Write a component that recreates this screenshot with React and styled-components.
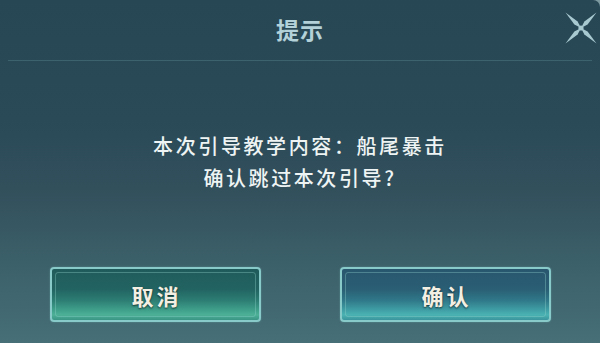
import React from "react";
import styled, { createGlobalStyle } from "styled-components";

const Global = createGlobalStyle`
  html, body { margin: 0; padding: 0; background: #7c9aa0; }
  body { font-family: "Noto Sans CJK SC", "Noto Sans", sans-serif; }
`;

const Panel = styled.div`
  width: 600px;
  height: 343px;
  box-sizing: border-box;
  display: flex;
  flex-direction: column;
  border-top-right-radius: 7px;
  overflow: hidden;
  background: linear-gradient(
    180deg,
    #284755 0%,
    #2a4a57 35%,
    #324f5c 55%,
    #3b5f68 75%,
    #466f78 100%
  );
`;

const Header = styled.div`
  height: 60px;
  display: grid;
  grid-template-columns: 1fr auto 1fr;
  align-items: center;
`;

const Title = styled.div`
  grid-column: 2;
  font-size: 23px;
  font-weight: 700;
  letter-spacing: 1px;
  color: #b3d1d8;
  padding-bottom: 2px;
`;

const CloseButton = styled.div`
  grid-column: 3;
  justify-self: end;
  width: 34px;
  height: 34px;
  margin-right: 2px;
  margin-bottom: 4px;
  display: flex;
`;

const Divider = styled.div`
  height: 1px;
  margin: 0 8px;
  background: rgba(110, 160, 170, 0.3);
`;

const Message = styled.div`
  margin-top: 69px;
  height: 64px;
  text-align: center;
  font-size: 20px;
  font-weight: 500;
  line-height: 32px;
  letter-spacing: 2.6px;
  color: #eef4f3;
`;

const Buttons = styled.div`
  margin-top: 73px;
  display: flex;
  justify-content: center;
  gap: 79px;
`;

const palette = {
  cancel:
    "linear-gradient(180deg, #1f5b5a 0%, #226462 40%, #2d7e74 62%, #3f9f8a 80%, #4cb096 90%, #3a9584 100%)",
  confirm:
    "linear-gradient(180deg, #28566f 0%, #2a5f75 40%, #30798a 62%, #3f9ea5 80%, #4bb2b2 90%, #3a949c 100%)",
};

const Button = styled.div`
  position: relative;
  width: 211px;
  height: 55px;
  box-sizing: border-box;
  border: 2px solid #88c9c9;
  border-radius: 4px;
  background: ${(p) => palette[p.$variant]};
  display: flex;
  align-items: center;
  justify-content: center;
  font-size: 22px;
  font-weight: 700;
  letter-spacing: 3px;
  padding-left: 3px;
  color: #f3f0e3;
  text-shadow: 0 1px 2px rgba(0, 0, 0, 0.65);
  box-shadow: 0 0 2px rgba(140, 210, 210, 0.4);
  &::before {
    content: "";
    position: absolute;
    inset: 3px;
    border: 1px solid rgba(150, 215, 205, 0.35);
    border-radius: 3px;
    pointer-events: none;
  }
`;

const CloseIcon = () => (
  <svg width="34" height="34" viewBox="0 0 34 34">
    <g fill="#a9c9d1">
      <polygon points="17,17 13.6,10.4 1.5,1.5 10.4,13.6" />
      <polygon points="17,17 23.6,13.6 32.5,1.5 20.4,10.4" />
      <polygon points="17,17 10.4,20.4 1.5,32.5 13.6,23.6" />
      <polygon points="17,17 20.4,23.6 32.5,32.5 23.6,20.4" />
      <circle cx="17" cy="17" r="2.6" />
    </g>
  </svg>
);

export default function App() {
  return (
    <>
      <Global />
      <Panel>
        <Header>
          <Title>提示</Title>
          <CloseButton>
            <CloseIcon />
          </CloseButton>
        </Header>
        <Divider />
        <Message>
          <div>本次引导教学内容：船尾暴击</div>
          <div>确认跳过本次引导?</div>
        </Message>
        <Buttons>
          <Button $variant="cancel">取消</Button>
          <Button $variant="confirm">确认</Button>
        </Buttons>
      </Panel>
    </>
  );
}
